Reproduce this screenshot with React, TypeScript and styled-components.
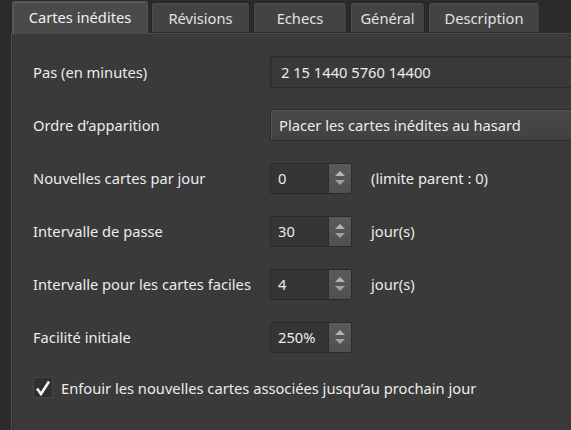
import styled, { createGlobalStyle } from 'styled-components';

const GlobalStyle = createGlobalStyle`
  html, body {
    margin: 0;
    padding: 0;
    background: #2b2b2b;
    overflow: hidden;
  }
  body {
    font-family: "Noto Sans", "Liberation Sans", sans-serif;
    font-size: 14.7px;
    color: #ececec;
  }
`;

const tabs = ['Cartes inédites', 'Révisions', 'Echecs', 'Général', 'Description'];
const tabWidths = [136, 99, 94, 75, 112];

const App = () => {
  return (
    <>
      <GlobalStyle />
      <Page>
        <TabBar>
          {tabs.map((t, i) => (
            <Tab key={t} $active={i === 0} $width={tabWidths[i]}>
              {t}
            </Tab>
          ))}
        </TabBar>
        <Panel>
          <FormGrid>
            <Label>Pas (en minutes)</Label>
            <TextField>2 15 1440 5760 14400</TextField>

            <Label>Ordre d’apparition</Label>
            <Select>Placer les cartes inédites au hasard</Select>

            <Label>Nouvelles cartes par jour</Label>
            <SpinRow value="0" suffix="(limite parent : 0)" />

            <Label>Intervalle de passe</Label>
            <SpinRow value="30" suffix="jour(s)" />

            <Label>Intervalle pour les cartes faciles</Label>
            <SpinRow value="4" suffix="jour(s)" />

            <Label>Facilité initiale</Label>
            <SpinRow value="250%" />
          </FormGrid>
          <CheckRow>
            <CheckBox>
              <svg width="16" height="16" viewBox="0 0 16 16">
                <path d="M2 8.5 L6 14 L14 1.5" fill="none" stroke="#f4f4f4" strokeWidth="2.6" />
              </svg>
            </CheckBox>
            Enfouir les nouvelles cartes associées jusqu’au prochain jour
          </CheckRow>
        </Panel>
      </Page>
    </>
  );
};

const SpinRow = ({ value, suffix }: { value: string; suffix?: string }) => (
  <FieldRow>
    <SpinBox>
      <SpinValue>{value}</SpinValue>
      <SpinButtons>
        <svg width="14" height="20" viewBox="0 0 14 20">
          <path d="M2 8 L7 3 L12 8 Z" fill="#b4b4b4" />
          <path d="M2 12 L7 17 L12 12 Z" fill="#a0a0a0" />
        </svg>
      </SpinButtons>
    </SpinBox>
    {suffix && <Suffix>{suffix}</Suffix>}
  </FieldRow>
);

const Page = styled.div`
  padding-left: 11px;
  height: 430px;
  display: flex;
  flex-direction: column;
`;

const TabBar = styled.div`
  display: flex;
  align-items: flex-end;
  gap: 3px;
  height: 33px;
  padding-left: 1px;
  position: relative;
  z-index: 1;
`;

const Tab = styled.div<{ $active: boolean; $width: number }>`
  width: ${(p) => p.$width}px;
  box-sizing: border-box;
  height: ${(p) => (p.$active ? 33 : 30)}px;
  margin-bottom: ${(p) => (p.$active ? -1 : 1)}px;
  display: flex;
  align-items: center;
  justify-content: center;
  padding-bottom: ${(p) => (p.$active ? 2 : 0)}px;
  background: ${(p) => (p.$active ? '#4a4a4a' : '#434343')};
  border: 1px solid ${(p) => (p.$active ? '#555' : '#262626')};
  border-bottom: none;
  border-radius: 3px 3px 0 0;
  box-shadow: inset 1px 1px 0 ${(p) => (p.$active ? '#5a5a5a' : '#4f4f4f')};
  color: ${(p) => (p.$active ? '#f0f0f0' : '#e2e2e2')};
`;

const Panel = styled.div`
  flex: 1;
  background: #3a3a3a;
  border-left: 1px solid #4e4e4e;
  border-top: 1px solid #4a4a4a;
  box-shadow: inset 1px 0 0 #333;
  padding: 22px 0 0 21px;
`;

const FormGrid = styled.div`
  display: grid;
  grid-template-columns: 237px 1fr;
  grid-auto-rows: 32px;
  row-gap: 21px;
  align-items: center;
`;

const Label = styled.div`
  white-space: nowrap;
`;

const TextField = styled.div`
  height: 32px;
  box-sizing: border-box;
  margin-right: -20px;
  background: #393939;
  border: 1px solid #2a2a2a;
  border-right: none;
  border-radius: 2px 0 0 2px;
  box-shadow: inset 1px 1px 0 #333;
  padding: 0 10px;
  display: flex;
  align-items: center;
`;

const Select = styled(TextField)`
  background: linear-gradient(#474747, #424242);
  border-color: #2c2c2c;
  box-shadow: inset 1px 1px 0 #555;
  padding-left: 8px;
`;

const FieldRow = styled.div`
  display: flex;
  align-items: center;
  gap: 19px;
`;

const SpinBox = styled.div`
  width: 82px;
  height: 31px;
  box-sizing: border-box;
  display: flex;
  border: 1px solid #2a2a2a;
  border-radius: 2px;
  overflow: hidden;
`;

const SpinValue = styled.div`
  flex: 1;
  background: #353535;
  padding-left: 7px;
  display: flex;
  align-items: center;
`;

const SpinButtons = styled.div`
  width: 22px;
  background: linear-gradient(#5a5a5a, #505050);
  border-left: 1px solid #2e2e2e;
  display: flex;
  align-items: center;
  justify-content: center;
`;

const Suffix = styled.div`
  white-space: nowrap;
`;

const CheckRow = styled.div`
  display: flex;
  align-items: center;
  gap: 8px;
  margin-top: 24px;
  white-space: nowrap;
`;

const CheckBox = styled.div`
  width: 20px;
  height: 21px;
  box-sizing: border-box;
  background: #2f2f2f;
  border: 1px solid #444;
  display: flex;
  align-items: center;
  justify-content: center;
`;

export default App;
